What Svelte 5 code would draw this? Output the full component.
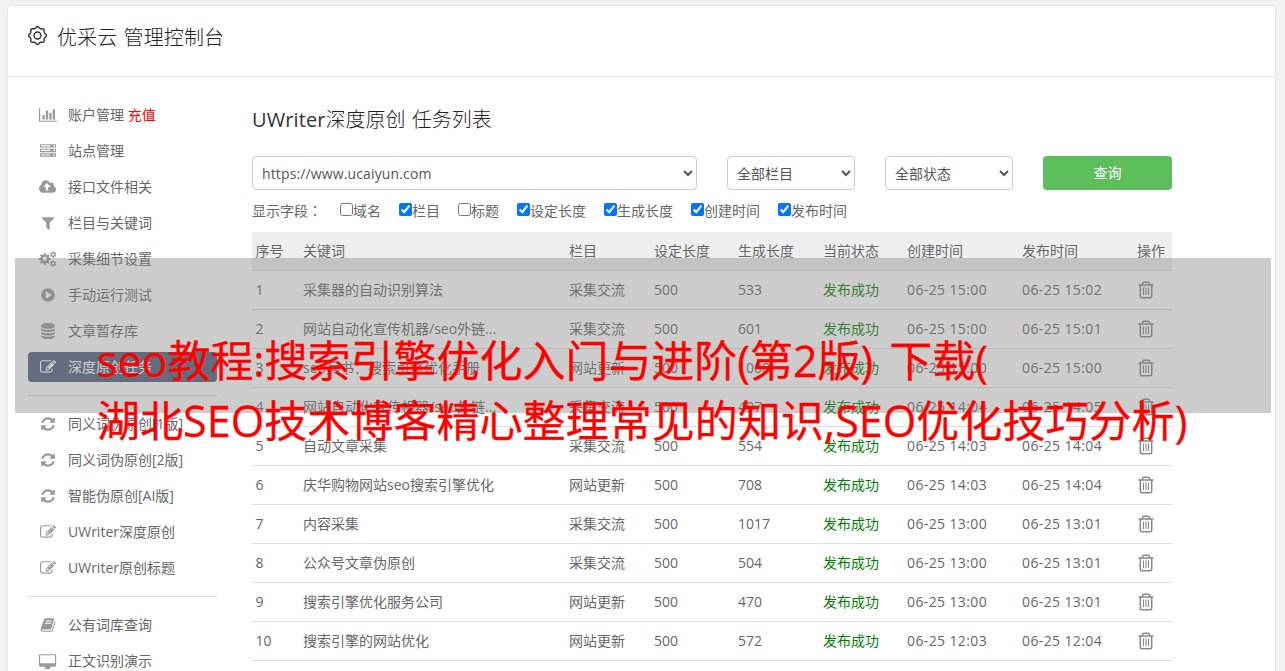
<script lang="ts">
	const icons: Record<string, { w: number; d: string }> = {
		chart: { w: 2048, d: 'M640 896v512h-256v-512h256zm384-512v1024h-256v-1024h256zm1024 1152v128h-2048v-1536h128v1408h1920zm-640-896v768h-256v-768h256zm384-384v1152h-256v-1152h256z' },
		server: { w: 1792, d: 'M128 1408h1024v-128h-1024v128zm0-512h1024v-128h-1024v128zm1568 448q0-40-28-68t-68-28-68 28-28 68 28 68 68 28 68-28 28-68zm-1568-960h1024v-128h-1024v128zm1568 448q0-40-28-68t-68-28-68 28-28 68 28 68 68 28 68-28 28-68zm0-512q0-40-28-68t-68-28-68 28-28 68 28 68 68 28 68-28 28-68zm96 832v384h-1792v-384h1792zm0-512v384h-1792v-384h1792zm0-512v384h-1792v-384h1792z' },
		upload: { w: 1920, d: 'M1280 864q0-14-9-23l-352-352q-9-9-23-9t-23 9l-351 351q-10 12-10 24 0 14 9 23t23 9h224v352q0 13 9.500 22.500t22.500 9.500h192q13 0 22.500-9.500t9.500-22.500v-352h224q13 0 22.500-9.500t9.500-22.500zm640 288q0 159-112.500 271.500t-271.500 112.500h-1088q-185 0-316.500-131.500t-131.500-316.500q0-130 70-240t188-165q-2-30-2-43 0-212 150-362t362-150q156 0 285.500 87t188.500 231q71-62 166-62 106 0 181 75t75 181q0 76-41 138 130 31 213.500 135.500t83.500 238.500z' },
		filter: { w: 1792, d: 'M1595 295q17 41-14 70l-493 493v742q0 42-39 59-13 5-25 5-27 0-45-19l-256-256q-19-19-19-45v-486l-493-493q-31-29-14-70 17-39 59-39h1280q42 0 59 39z' },
		play: { w: 1792, d: 'M896 128a768 768 0 1 1 0 1536a768 768 0 1 1 0-1536zm384 823q32-18 32-55t-32-55l-544-320q-31-19-64-1-32 19-32 56v640q0 37 32 56 16 8 32 8 17 0 32-9z' },
		database: { w: 1792, d: 'M896 768q237 0 443-43t325-127v170q0 69-103 128t-280 93.500-385 34.500-385-34.500-280-93.500-103-128v-170q119 84 325 127t443 43zm0 768q237 0 443-43t325-127v170q0 69-103 128t-280 93.500-385 34.500-385-34.500-280-93.500-103-128v-170q119 84 325 127t443 43zm0-384q237 0 443-43t325-127v170q0 69-103 128t-280 93.500-385 34.500-385-34.500-280-93.500-103-128v-170q119 84 325 127t443 43zm0-1152q208 0 385 34.500t280 93.500 103 128v128q0 69-103 128t-280 93.500-385 34.500-385-34.500-280-93.500-103-128v-128q0-69 103-128t280-93.500 385-34.500z' },
		edit: { w: 1792, d: 'M888 1184l116-116-152-152-116 116v56h96v96h56zm440-720q-16-16-33 1l-350 350q-17 17-1 33t33-1l350-350q17-17 1-33zm80 594v190q0 119-84.500 203.500t-203.500 84.500h-832q-119 0-203.500-84.500t-84.500-203.500v-832q0-119 84.500-203.500t203.500-84.500h832q63 0 117 25 15 7 18 23 3 17-9 29l-49 49q-14 14-32 8-23-6-45-6h-832q-66 0-113 47t-47 113v832q0 66 47 113t113 47h832q66 0 113-47t47-113v-126q0-13 9-22l64-64q15-15 35-7t20 29zm-96-738l288 288-672 672h-288v-288zm444 132l-92 92-288-288 92-92q28-28 68-28t68 28l152 152q28 28 28 68t-28 68z' },
		refresh: { w: 1792, d: 'M1639 1056q0 5-1 7-64 268-268 434.500t-478 166.500q-146 0-282.500-55t-243.500-157l-129 129q-19 19-45 19t-45-19-19-45v-448q0-26 19-45t45-19h448q26 0 45 19t19 45-19 45l-137 137q71 66 161 102t187 36q134 0 250-65t186-179q11-17 53-117 8-23 30-23h192q13 0 22.500 9.500t9.500 22.500zm25-800v448q0 26-19 45t-45 19h-448q-26 0-45-19t-19-45 19-45l138-138q-148-137-349-137-134 0-250 65t-186 179q-11 17-53 117-8 23-30 23h-199q-13 0-22.500-9.500t-9.500-22.500v-7q65-268 270-434.500t480-166.500q146 0 284 55.500t245 156.500l130-129q19-19 45-19t45 19 19 45z' },
		book: { w: 1792, d: 'M1703 478q40 57 18 129l-275 906q-19 64-76.500 107.500t-122.500 43.500h-923q-77 0-148.500-53.500t-99.500-131.500q-24-67-2-127 0-4 3-27t4-37q1-8-3-21.500t-3-19.500q2-11 8-21t16.500-23.500 16.500-23.500q23-38 45-91.500t30-91.500q3-10 .5-30t-.5-28q3-11 17-28t17-23q21-36 42-92t25-90q1-9-2.500-32t.5-28q4-13 22-30.500t22-22.500q19-26 42.500-84.500t27.500-96.500q1-8-3-25.500t-2-26.500q2-8 9-18t18-23 17-21q8-12 16.500-30.500t15-35 16-36 19.500-32 26.500-23.500 36-11.500 47.500 5.500l-1 3q38-9 51-9h761q74 0 114 56t18 130l-274 906q-36 119-71.500 153.500t-128.500 34.500h-869q-27 0-38 15-11 16-1 43 24 70 144 70h923q29 0 56-15.500t35-41.500l300-987q7-22 5-57 38 15 59 43zm-1064 2q-4 13 2 22.500t20 9.500h608q13 0 25.500-9.500t16.500-22.500l21-64q4-13-2-22.500t-20-9.500h-608q-13 0-25.500 9.500t-16.500 22.500zm-83 256q-4 13 2 22.500t20 9.500h608q13 0 25.500-9.500t16.500-22.500l21-64q4-13-2-22.500t-20-9.500h-608q-13 0-25.500 9.500t-16.500 22.500z' },
		desktop: { w: 1920, d: 'M160 128h1600q66 0 113 47t47 113v1088q0 66-47 113t-113 47h-544q0 60 64 150v42q0 64-64 64h-512q-64 0-64-64v-42q64-90 64-150h-544q-66 0-113-47t-47-113v-1088q0-66 47-113t113-47zm0 128q-32 0-32 32v832q0 32 32 32h1600q32 0 32-32v-832q0-32-32-32z' },
	};

	const groups = [
		[
			{ icon: 'chart', label: '账户管理', extra: '充值' },
			{ icon: 'server', label: '站点管理' },
			{ icon: 'upload', label: '接口文件相关' },
			{ icon: 'filter', label: '栏目与关键词' },
			{ icon: 'cogs', label: '采集细节设置' },
			{ icon: 'play', label: '手动运行测试' },
			{ icon: 'database', label: '文章暂存库' },
			{ icon: 'edit', label: '深度原创任务', active: true },
		],
		[
			{ icon: 'refresh', label: '同义词伪原创[1版]' },
			{ icon: 'refresh', label: '同义词伪原创[2版]' },
			{ icon: 'refresh', label: '智能伪原创[AI版]' },
			{ icon: 'edit', label: 'UWriter深度原创' },
			{ icon: 'edit', label: 'UWriter原创标题' },
		],
		[
			{ icon: 'book', label: '公有词库查询' },
			{ icon: 'desktop', label: '正文识别演示' },
		],
	] as { icon: string; label: string; extra?: string; active?: boolean }[][];

	let fields = $state([
		{ label: '域名', on: false },
		{ label: '栏目', on: true },
		{ label: '标题', on: false },
		{ label: '设定长度', on: true },
		{ label: '生成长度', on: true },
		{ label: '创建时间', on: true },
		{ label: '发布时间', on: true },
	]);

	const columns = ['序号', '关键词', '栏目', '设定长度', '生成长度', '当前状态', '创建时间', '发布时间', '操作'];

	// keyword, category, generated length, created, published
	const tasks = [
		['采集器的自动识别算法', '采集交流', 533, '06-25 15:00', '06-25 15:02'],
		['网站自动化宣传机器/seo外链...', '采集交流', 601, '06-25 15:00', '06-25 15:01'],
		['seo兵书：搜索引擎优化手册', '网站更新', 1008, '06-25 15:00', '06-25 15:00'],
		['网站自动化宣传机器/seo外链...', '采集交流', 497, '06-25 14:04', '06-25 14:05'],
		['自动文章采集', '采集交流', 554, '06-25 14:03', '06-25 14:04'],
		['庆华购物网站seo搜索引擎优化', '网站更新', 708, '06-25 14:03', '06-25 14:04'],
		['内容采集', '采集交流', 1017, '06-25 13:00', '06-25 13:01'],
		['公众号文章伪原创', '采集交流', 504, '06-25 13:00', '06-25 13:01'],
		['搜索引擎优化服务公司', '网站更新', 470, '06-25 13:00', '06-25 13:01'],
		['搜索引擎的网站优化', '网站更新', 572, '06-25 12:03', '06-25 12:04'],
	];

	// Closed outline of a gear with rounded teeth
	function gear(cx: number, cy: number, r: number, depth: number, teeth: number) {
		let d = '';
		const steps = teeth * 12;
		for (let i = 0; i < steps; i++) {
			const a = (i / steps) * Math.PI * 2;
			const wave = Math.max(-1, Math.min(1, Math.cos(a * teeth) * 1.7));
			const rr = r + depth * wave;
			d += `${i ? 'L' : 'M'}${(cx + rr * Math.sin(a)).toFixed(2)} ${(cy - rr * Math.cos(a)).toFixed(2)}`;
		}
		return d + 'z';
	}

	function hole(cx: number, cy: number, r: number) {
		return `M${cx - r} ${cy}a${r} ${r} 0 1 0 ${2 * r} 0a${r} ${r} 0 1 0 ${-2 * r} 0z`;
	}

	const cogs = gear(5.8, 8, 5.2, 0.8, 8) + hole(5.8, 8, 2)
		+ gear(14.2, 3.6, 2.8, 0.5, 6) + hole(14.2, 3.6, 1.1)
		+ gear(14.2, 12.6, 2.8, 0.5, 6) + hole(14.2, 12.6, 1.1);
</script>

<div class="panel">
	<header>
		<svg class="logo" viewBox="0 0 18 18">
			<path d={gear(9, 9, 7.7, 0.6, 8)} />
			<circle cx="9" cy="9" r="3.3" />
		</svg>
		<h1>优采云 管理控制台</h1>
	</header>

	<div class="body">
		<nav>
			{#each groups as group}
				<ul>
					{#each group as item}
						<li class:active={item.active}>
							<span class="icon">
								{#if item.icon === 'cogs'}
									<svg width="18" height="16" viewBox="0 0 18 16"><path d={cogs} fill-rule="evenodd" /></svg>
								{:else}
									<svg
										width={(icons[item.icon].w / 1792) * 16}
										height="16"
										viewBox="0 0 {icons[item.icon].w} 1792"
									><path d={icons[item.icon].d} fill-rule="evenodd" /></svg>
								{/if}
							</span>
							<span>{item.label}{#if item.extra}&nbsp;<em>{item.extra}</em>{/if}</span>
						</li>
					{/each}
				</ul>
			{/each}
		</nav>

		<main>
			<h2><span class="latin">UWriter</span>深度原创 任务列表</h2>

			<div class="filters">
				<select class="site"><option>https://www.ucaiyun.com</option></select>
				<select><option>全部栏目</option></select>
				<select><option>全部状态</option></select>
				<button>查询</button>
			</div>

			<div class="fields">
				<span class="caption">显示字段<span class="colon">：</span></span>
				{#each fields as field}
					<label><input type="checkbox" bind:checked={field.on} />{field.label}</label>
				{/each}
			</div>

			<div class="table">
				<div class="row head">
					{#each columns as column}<span>{column}</span>{/each}
				</div>
				{#each tasks as [keyword, category, length, created, published], i}
					<div class="row">
						<span>{i + 1}</span>
						<span>{keyword}</span>
						<span>{category}</span>
						<span>500</span>
						<span>{length}</span>
						<span class="ok">发布成功</span>
						<span class="time">{created}</span>
						<span class="time">{published}</span>
						<span class="trash">
							<svg width="16" height="18" viewBox="0 0 16 18">
								<path d="M.5 4h15M4.500 4V2.700q0-1.500 1.500-1.500h4q1.500 0 1.500 1.500v1.300M2.300 4v11.300q0 1.500 1.500 1.500h8.400q1.500 0 1.500-1.500V4" />
								<path class="thin" d="M5.500 6.500v7.500M8 6.500v7.500M10.500 6.500v7.500" />
							</svg>
						</span>
					</div>
				{/each}
			</div>
		</main>
	</div>
</div>

<div class="band"></div>
<p class="title">
	<span class="line first">seo教程:搜索引擎优化入门与进阶(第2版) 下载(</span>
	<span class="line second">湖北SEO技术博客精心整理常见的知识,SEO优化技巧分析)</span>
</p>

<style>
	:global(body) {
		background: #f2f2f2;
		overflow: hidden;
	}

	:global(#app) {
		height: 671px;
		overflow: hidden;
		position: relative;
		font: 14px/20px 'Open Sans', 'Noto Sans CJK SC', sans-serif;
		color: #666;
	}

	.panel {
		box-sizing: border-box;
		width: 1269px;
		height: 700px;
		margin: 5px 0 0 7px;
		border: 1px solid #e4e4e4;
		border-radius: 4px;
		background: #fff;
	}

	header {
		display: flex;
		align-items: center;
		gap: 11px;
		box-sizing: border-box;
		height: 71px;
		padding: 0 20px 7px;
		border-bottom: 1px solid #e4e4e4;
		color: #333;
	}

	.logo {
		width: 19px;
		height: 19px;
		margin-top: -4px;
		fill: none;
		stroke: #333;
		stroke-width: 1.3;
	}

	h1,
	h2 {
		margin: 0;
		font-size: 20px;
		line-height: 28px;
		font-weight: 300;
		color: #222;
	}

	h1 {
		margin-left: -1px;
		word-spacing: 1px;
		letter-spacing: 0.1px;
	}

	.latin {
		font-weight: 400;
		letter-spacing: 0.1px;
		color: #333;
	}

	.body {
		display: flex;
		gap: 35px;
		padding: 23px 20px 0;
	}

	nav {
		flex: none;
		width: 189px;
	}

	ul {
		display: grid;
		gap: 6px;
		margin: 0;
		padding: 0;
		list-style: none;
	}

	ul + ul {
		margin-top: 13px;
		padding-top: 13px;
		border-top: 1px solid #d9d9d9;
	}

	li {
		display: flex;
		align-items: center;
		height: 30px;
		border-radius: 4px;
	}

	.icon {
		display: flex;
		justify-content: center;
		width: 40px;
	}

	.icon svg {
		fill: #999;
	}

	.active {
		background: #53627c;
		color: #fff;
	}

	.active .icon svg {
		fill: #fff;
	}

	em {
		font-style: normal;
		color: #f00;
	}

	main {
		width: 920px;
	}

	h2 {
		margin-top: 6px;
		word-spacing: 1px;
	}

	.filters {
		display: grid;
		grid-template-columns: 445px 128px 128px 129px;
		gap: 30px;
		margin-top: 22px;
	}

	select,
	button {
		box-sizing: border-box;
		height: 34px;
		border-radius: 4px;
		font: inherit;
	}

	select {
		padding: 0 5px;
		border: 1px solid #ccc;
		background: #fff;
		color: #555;
	}

	.site {
		letter-spacing: 0.13px;
	}

	button {
		border: 0;
		background: #5cbf5c;
		color: #fff;
	}

	.fields {
		display: flex;
		gap: 18px;
		height: 20px;
		margin-top: 11px;
	}

	.caption {
		width: 70px;
		white-space: nowrap;
	}

	.colon {
		font-family: 'Noto Sans CJK TC', sans-serif;
		line-height: 0;
	}

	label {
		display: flex;
	}

	input {
		width: 13px;
		height: 13px;
		margin: 2px 0 0;
	}

	.table {
		margin-top: 11px;
	}

	.row {
		display: grid;
		grid-template-columns: 47.5px 266px 85px 84px 85px 84px 115px 115px 38px;
		align-items: center;
		box-sizing: border-box;
		height: 39px;
		padding-left: 3.5px;
		border-bottom: 1px solid #ddd;
		white-space: nowrap;
	}

	.head {
		background: #eee;
	}

	.ok {
		color: #008000;
	}

	.time {
		letter-spacing: 0.38px;
	}

	.trash {
		display: flex;
		padding-left: 1px;
	}

	.trash svg {
		fill: none;
		stroke: #888;
		stroke-width: 1.5;
	}

	.trash .thin {
		stroke-width: 1.1;
	}

	/* Translucent strip and headline lie over the console */
	.band {
		position: absolute;
		top: 258px;
		left: 15px;
		width: 1256px;
		height: 155px;
		background: rgba(128, 128, 128, 0.4);
	}

	.title {
		position: absolute;
		top: 331px;
		left: 97px;
		margin: 0;
		font-size: 43px;
		line-height: 60px;
		color: #f00;
		white-space: nowrap;
		-webkit-text-stroke: 0.3px #f00;
	}

	.line {
		display: block;
	}

	.first {
		letter-spacing: -0.03px;
		word-spacing: 5px;
	}

	.second {
		letter-spacing: 0.06px;
	}
</style>
